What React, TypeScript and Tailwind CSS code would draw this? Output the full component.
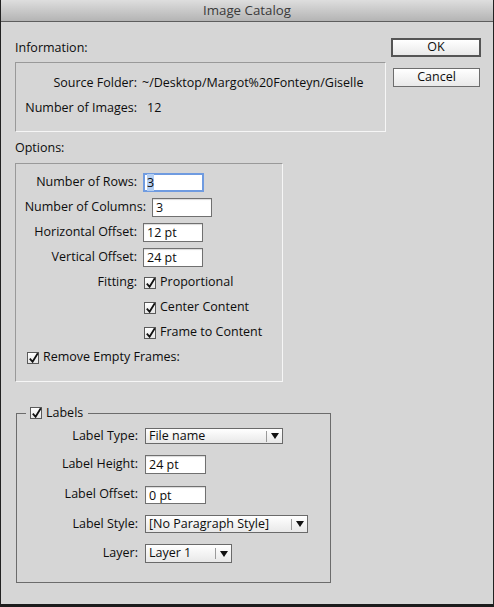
import React from "react";

function Check() {
  return (
    <span className="relative inline-block h-[12px] w-[12px] shrink-0 border border-[#5a5a5a] bg-gradient-to-b from-white to-[#e6e6e6]">
      <svg viewBox="0 0 12 12" className="absolute left-0 top-0 h-[12px] w-[12px] overflow-visible">
        <path d="M1.8 5.6 L4.6 8.8 L9.8 0.2" stroke="#111" strokeWidth="1.8" fill="none" />
      </svg>
    </span>
  );
}

function Field({ value, className }: { value: string; className: string }) {
  return (
    <div className={"box-border border border-[#707070] bg-white pl-[3px] text-[12.5px] leading-[17px] shadow-[inset_0_1px_1px_rgba(0,0,0,0.15)] " + className}>
      {value}
    </div>
  );
}

function Select({ value, className }: { value: string; className: string }) {
  return (
    <div className={"box-border flex items-center border border-[#6a6a6a] bg-gradient-to-b from-white to-[#e8e8e8] " + className}>
      <span className="flex-1 whitespace-nowrap pl-[3px] text-[12.5px] leading-none">{value}</span>
      <span className="h-[11px] w-px bg-[#9a9a9a]" />
      <span className="flex w-[15px] items-center justify-center">
        <svg width="8" height="6" viewBox="0 0 8 6">
          <path d="M0 0 H8 L4 6 Z" fill="#111" />
        </svg>
      </span>
    </div>
  );
}

export default function App() {
  return (
    <div className="box-border flex h-[607px] w-[494px] flex-col border-x border-b-[3px] border-x-[#222] border-b-[#1c1c1c] bg-[#d6d6d6] font-['Open_Sans','Lucida_Grande',sans-serif] text-[12.5px] text-[#0d0d0d]">
      {/* title bar */}
      <div className="flex h-[22px] items-center justify-center border-b border-[#5e5e5e] bg-gradient-to-b from-[#dedede] to-[#b4b4b4] text-[13.3px] leading-none text-[#3a3a3a]">
        Image Catalog
      </div>

      <div className="flex pl-[14px]">
        {/* left column */}
        <div className="flex w-[371px] flex-col pt-[18px]">
          <div className="h-[16px] leading-[16px]">Information:</div>
          <div className="mt-[6px] flex h-[70px] flex-col border border-b-[#f6f6f6] border-l-[#999] border-r-[#f6f6f6] border-t-[#999] pt-[12px]">
            <div className="flex h-[16px] leading-[16px]">
              <span className="w-[121px] text-right whitespace-nowrap">Source Folder:</span>
              <span className="ml-[5px] whitespace-nowrap">~/Desktop/Margot%20Fonteyn/Giselle</span>
            </div>
            <div className="mt-[9px] flex h-[16px] leading-[16px]">
              <span className="w-[121px] text-right whitespace-nowrap">Number of Images:</span>
              <span className="ml-[10px]">12</span>
            </div>
          </div>

          <div className="mt-[8px] h-[16px] leading-[16px]">Options:</div>
          <div className="mt-[7px] flex w-[268px] flex-col gap-[6px] border border-b-[#f6f6f6] border-l-[#999] border-r-[#f6f6f6] border-t-[#999] pb-[14px] pt-[9px]">
            <div className="flex h-[19px] items-center">
              <span className="w-[121px] text-right whitespace-nowrap">Number of Rows:</span>
              <div className="ml-[6px] box-border h-[19px] w-[61px] border-2 border-[#6f9be0] bg-white pl-[2px] leading-[15px]">
                <span className="bg-[#b4cff3]">3</span>
              </div>
            </div>
            <div className="flex h-[19px] items-center">
              <span className="w-[130px] text-right whitespace-nowrap">Number of Columns:</span>
              <Field value="3" className="ml-[6px] h-[19px] w-[60px]" />
            </div>
            <div className="flex h-[19px] items-center">
              <span className="w-[121px] text-right whitespace-nowrap">Horizontal Offset:</span>
              <Field value="12 pt" className="ml-[6px] h-[19px] w-[60px]" />
            </div>
            <div className="flex h-[19px] items-center">
              <span className="w-[121px] text-right whitespace-nowrap">Vertical Offset:</span>
              <Field value="24 pt" className="ml-[6px] h-[19px] w-[60px]" />
            </div>
            <div className="flex h-[19px] items-center">
              <span className="w-[121px] text-right whitespace-nowrap">Fitting:</span>
              <span className="ml-[7px] flex items-center gap-[4px]">
                <Check />
                <span>Proportional</span>
              </span>
            </div>
            <div className="flex h-[19px] items-center pl-[128px]">
              <span className="flex items-center gap-[4px]">
                <Check />
                <span>Center Content</span>
              </span>
            </div>
            <div className="flex h-[19px] items-center pl-[128px]">
              <span className="flex items-center gap-[4px]">
                <Check />
                <span>Frame to Content</span>
              </span>
            </div>
            <div className="flex h-[19px] items-center pl-[11px]">
              <span className="flex items-center gap-[4px]">
                <Check />
                <span>Remove Empty Frames:</span>
              </span>
            </div>
          </div>

          <fieldset className="ml-[1px] mt-[23px] flex w-[315px] flex-col gap-[11px] border border-[#6c6c6c] pb-[19px] pt-[7px]">
            <legend className="ml-[9px] flex h-[16px] items-center gap-[4px] pl-[4px] pr-[5px]">
              <Check />
              <span className="leading-[16px]">Labels</span>
            </legend>
            <div className="flex h-[16px] items-center">
              <span className="w-[121px] text-right whitespace-nowrap">Label Type:</span>
              <Select value="File name" className="ml-[7px] h-[16px] w-[138px]" />
            </div>
            <div className="flex h-[19px] items-center">
              <span className="w-[121px] text-right whitespace-nowrap">Label Height:</span>
              <Field value="24 pt" className="ml-[7px] h-[19px] w-[61px]" />
            </div>
            <div className="flex h-[19px] items-center">
              <span className="w-[121px] text-right whitespace-nowrap">Label Offset:</span>
              <Field value="0 pt" className="ml-[7px] h-[18px] w-[61px]" />
            </div>
            <div className="flex h-[18px] items-center">
              <span className="w-[121px] text-right whitespace-nowrap">Label Style:</span>
              <Select value="[No Paragraph Style]" className="ml-[7px] h-[18px] w-[163px]" />
            </div>
            <div className="flex h-[19px] items-center">
              <span className="w-[121px] text-right whitespace-nowrap">Layer:</span>
              <Select value="Layer 1" className="ml-[7px] h-[19px] w-[87px]" />
            </div>
          </fieldset>
        </div>

        {/* right column */}
        <div className="ml-[5px] flex flex-col pt-[16px]">
          <button className="box-border flex h-[19px] w-[90px] items-center justify-center border-2 border-[#555] bg-gradient-to-b from-white to-[#e9e9e9] text-[12.5px] leading-none">
            OK
          </button>
          <button className="ml-[2px] mt-[11px] box-border flex h-[19px] w-[87px] items-center justify-center border border-[#6d6d6d] bg-gradient-to-b from-white to-[#e9e9e9] text-[12.5px] leading-none">
            Cancel
          </button>
        </div>
      </div>
    </div>
  );
}
